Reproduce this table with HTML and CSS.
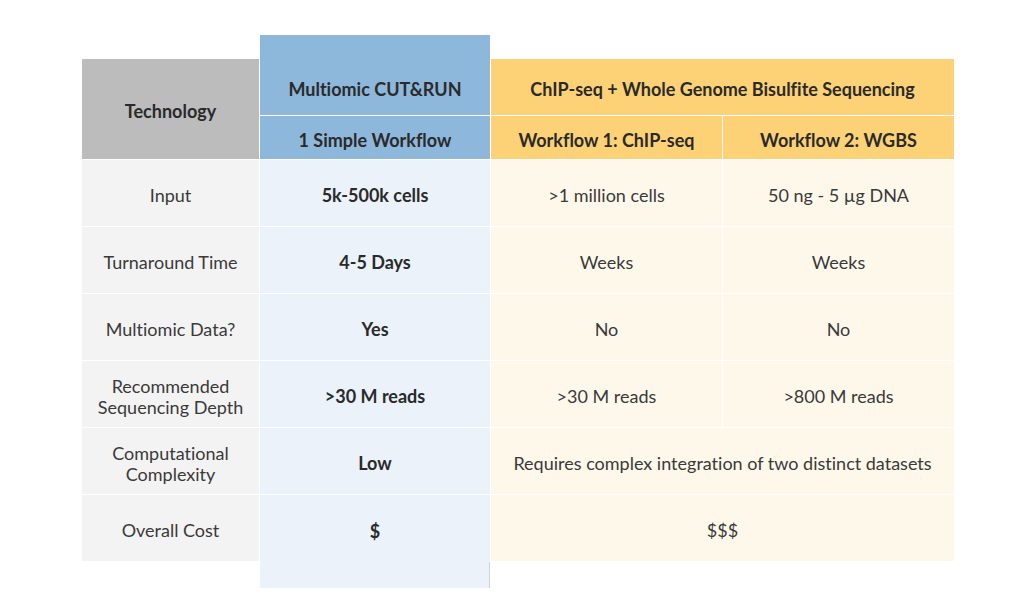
FILE: index.html
```html
<!DOCTYPE html>
<html>
<head>
<meta charset="utf-8">
<link rel="stylesheet" href="styles.css">
</head>
<body>
<div class="page">
  <div class="table">
    <div class="cell blue-head main-head">Multiomic CUT&amp;RUN</div>
    <div class="cell gray-head tech">Technology</div>
    <div class="cell yellow-head chip-head">ChIP-seq + Whole Genome Bisulfite Sequencing</div>
    <div class="cell blue-head r3 c2">1 Simple Workflow</div>
    <div class="cell yellow-head r3 c3">Workflow 1: ChIP-seq</div>
    <div class="cell yellow-head r3 c4">Workflow 2: WGBS</div>

    <div class="cell label r4">Input</div>
    <div class="cell ours r4">5k-500k cells</div>
    <div class="cell theirs r4 c3">&gt;1 million cells</div>
    <div class="cell theirs r4 c4">50 ng - 5 µg DNA</div>

    <div class="cell label r5">Turnaround Time</div>
    <div class="cell ours r5">4-5 Days</div>
    <div class="cell theirs r5 c3">Weeks</div>
    <div class="cell theirs r5 c4">Weeks</div>

    <div class="cell label r6">Multiomic Data?</div>
    <div class="cell ours r6">Yes</div>
    <div class="cell theirs r6 c3">No</div>
    <div class="cell theirs r6 c4">No</div>

    <div class="cell label r7">Recommended<br>Sequencing Depth</div>
    <div class="cell ours r7">&gt;30 M reads</div>
    <div class="cell theirs r7 c3">&gt;30 M reads</div>
    <div class="cell theirs r7 c4">&gt;800 M reads</div>

    <div class="cell label r8">Computational<br>Complexity</div>
    <div class="cell ours r8">Low</div>
    <div class="cell theirs r8 span2">Requires complex integration of two distinct datasets</div>

    <div class="cell label r9">Overall Cost</div>
    <div class="cell ours last">$</div>
    <div class="cell theirs r9 span2">$$$</div>
  </div>
</div>
</body>
</html>
```

FILE: styles.css
```css
html, body {
  margin: 0;
  padding: 0;
  background: #ffffff;
}

body {
  font-family: "Lato", "Open Sans", sans-serif;
  color: #333333;
  font-variant-ligatures: none;
}

.page {
  padding: 35px 0 0 82px;
}

.table {
  display: grid;
  grid-template-columns: 177px 230px 231px 231px;
  grid-template-rows: 23px 56px 43px repeat(6, 66px) 26px;
  gap: 1px;
  width: 872px;
}

.cell {
  display: flex;
  align-items: center;
  justify-content: center;
  text-align: center;
  font-size: 18px;
  line-height: 21px;
  padding-top: 5px;
  box-sizing: border-box;
}

.r3 { grid-row: 3; }
.r4 { grid-row: 4; }
.r5 { grid-row: 5; }
.r6 { grid-row: 6; }
.r7 { grid-row: 7; }
.r8 { grid-row: 8; }
.r9 { grid-row: 9; }
.c2 { grid-column: 2; }
.c3 { grid-column: 3; }
.c4 { grid-column: 4; }

.gray-head {
  background: #bcbcbc;
  font-weight: 700;
  color: #2a2a2a;
}

.blue-head {
  background: #8db8dc;
  font-weight: 700;
  color: #2a2a2a;
}

.yellow-head {
  background: #fdd276;
  font-weight: 700;
  color: #2a2a2a;
}

.main-head {
  grid-column: 2;
  grid-row: 1 / span 2;
  padding-top: 29px;
}

.tech {
  grid-column: 1;
  grid-row: 2 / span 2;
}

.chip-head {
  grid-column: 3 / span 2;
  grid-row: 2;
}

.label {
  grid-column: 1;
  background: #f3f3f3;
  color: #3a3a3a;
}

.ours {
  grid-column: 2;
  background: #ebf2fa;
  font-weight: 700;
  color: #2a2a2a;
}

.ours.last {
  grid-row: 9 / span 2;
  padding-top: 0;
  padding-bottom: 20px;
  background:
    linear-gradient(#cfd3d8, #cfd3d8) right bottom / 1px 26px no-repeat,
    #ebf2fa;
}

.theirs {
  background: #fef8eb;
  color: #3a3a3a;
}

.span2 {
  grid-column: 3 / span 2;
}
```
